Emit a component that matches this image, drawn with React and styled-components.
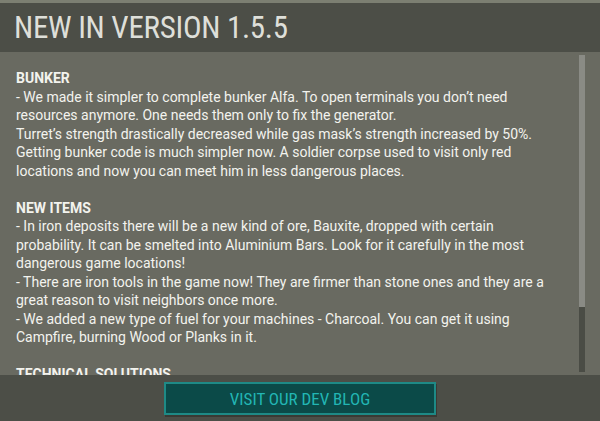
import React from 'react';
import styled, { createGlobalStyle } from 'styled-components';

const sections = [
  {
    title: 'BUNKER',
    lines: [
      '- We made it simpler to complete bunker Alfa. To open terminals you don’t need resources anymore. One needs them only to fix the generator.',
      'Turret’s strength drastically decreased while gas mask’s strength increased by 50%.',
      'Getting bunker code is much simpler now. A soldier corpse used to visit only red locations and now you can meet him in less dangerous places.',
    ],
  },
  {
    title: 'NEW ITEMS',
    lines: [
      '- In iron deposits there will be a new kind of ore, Bauxite, dropped with certain probability. It can be smelted into Aluminium Bars. Look for it carefully in the most dangerous game locations!',
      '- There are iron tools in the game now! They are firmer than stone ones and they are a great reason to visit neighbors once more.',
      '- We added a new type of fuel for your machines - Charcoal. You can get it using Campfire, burning Wood or Planks in it.',
    ],
  },
  {
    title: 'TECHNICAL SOLUTIONS',
    lines: ['- Performance improvements and bug fixes.'],
  },
];

export default function App() {
  return (
    <>
      <GlobalStyle />
      <Page>
        <TopStrip />
        <Header>
          <Title>NEW IN VERSION 1.5.5</Title>
        </Header>
        <Body>
          <Content>
            {sections.map(s => (
              <Section key={s.title}>
                <SectionTitle>{s.title}</SectionTitle>
                {s.lines.map((l, i) => (
                  <Line key={i}>{l}</Line>
                ))}
              </Section>
            ))}
          </Content>
          <ScrollTrack>
            <ScrollThumb />
          </ScrollTrack>
        </Body>
        <Footer>
          <BlogButton>VISIT OUR DEV BLOG</BlogButton>
        </Footer>
      </Page>
    </>
  );
}

const GlobalStyle = createGlobalStyle`
  html, body {
    margin: 0;
    padding: 0;
    background: #4c4e47;
  }
  * {
    box-sizing: border-box;
  }
`;

const Page = styled.div`
  display: flex;
  flex-direction: column;
  width: 600px;
  height: 421px;
  overflow: hidden;
  font-family: Roboto, 'Noto Sans', sans-serif;
`;

const TopStrip = styled.div`
  height: 3px;
  background: #7c7f72;
`;

const Header = styled.header`
  display: flex;
  align-items: center;
  height: 49px;
  padding-left: 14px;
  background: #4c4e47;
`;

const Title = styled.h1`
  margin: 0;
  font-size: 31px;
  font-weight: 400;
  color: #dedfd9;
  font-stretch: condensed;
  letter-spacing: -0.3px;
`;

const Body = styled.main`
  flex: 1;
  display: flex;
  min-height: 0;
  background: #696a61;
`;

const Content = styled.div`
  flex: 1;
  min-width: 0;
  overflow: hidden;
  padding: 17px 14px 0 16px;
  color: #f3f3ee;
  font-size: 14px;
  line-height: 18.5px;
`;

const Section = styled.section`
  margin-bottom: 18.5px;
`;

const SectionTitle = styled.div`
  font-weight: 700;
`;

const Line = styled.div``;

const ScrollTrack = styled.div`
  display: flex;
  flex-direction: column;
  width: 6px;
  margin: 3px 15px 3px 0;
  background: #4a4c45;
`;

const ScrollThumb = styled.div`
  height: 252px;
  background: #8a8b85;
`;

const Footer = styled.footer`
  display: flex;
  justify-content: center;
  height: 46px;
  padding-top: 7px;
  background: #4c4e47;
`;

const BlogButton = styled.button`
  width: 272px;
  height: 33px;
  border: 2px solid #1e8a86;
  background: #0b4a48;
  color: #22b6b4;
  font-family: Roboto, 'Noto Sans', sans-serif;
  font-size: 17px;
  font-stretch: condensed;
  box-shadow: 1px 2px 0 #3a3a34;
  cursor: pointer;
`;
